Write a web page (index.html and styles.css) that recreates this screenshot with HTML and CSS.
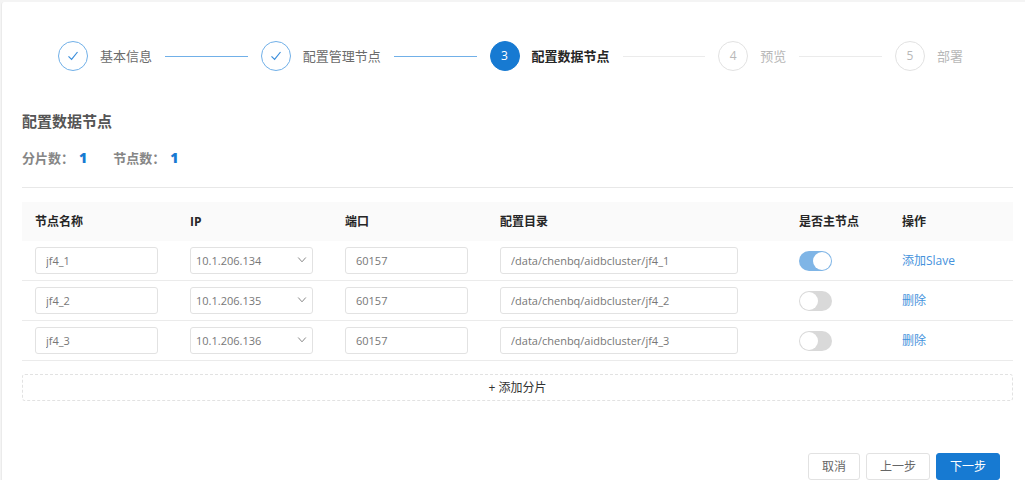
FILE: index.html
```html
<!DOCTYPE html>
<html lang="zh-CN">
<head>
<meta charset="utf-8">
<meta name="viewport" content="width=device-width, initial-scale=1">
<title>配置数据节点</title>
<link rel="stylesheet" href="styles.css">
</head>
<body>
<main class="card">
  <ol class="steps">
    <li class="step step-done">
      <span class="step-icon"><svg class="check" viewBox="0 0 12 12" aria-hidden="true"><path d="M1.5 6.4 4.6 9.4 10.5 2"/></svg></span>
      <span class="step-title">基本信息</span>
      <span class="step-line"></span>
    </li>
    <li class="step step-done">
      <span class="step-icon"><svg class="check" viewBox="0 0 12 12" aria-hidden="true"><path d="M1.5 6.4 4.6 9.4 10.5 2"/></svg></span>
      <span class="step-title">配置管理节点</span>
      <span class="step-line"></span>
    </li>
    <li class="step step-active" aria-current="step">
      <span class="step-icon">3</span>
      <span class="step-title">配置数据节点</span>
      <span class="step-line"></span>
    </li>
    <li class="step">
      <span class="step-icon">4</span>
      <span class="step-title">预览</span>
      <span class="step-line"></span>
    </li>
    <li class="step step-last">
      <span class="step-icon">5</span>
      <span class="step-title">部署</span>
    </li>
  </ol>

  <header class="summary">
    <h1 class="title">配置数据节点</h1>
    <div class="stats">
      <p class="stat">分片数：<strong class="stat-value">1</strong></p>
      <p class="stat">节点数：<strong class="stat-value">1</strong></p>
    </div>
  </header>

  <form class="form">
    <table class="nodes">
      <colgroup>
        <col class="col-field"><col class="col-field"><col class="col-field"><col><col class="col-master"><col class="col-action">
      </colgroup>
      <thead>
        <tr><th scope="col">节点名称</th><th scope="col">IP</th><th scope="col">端口</th><th scope="col">配置目录</th><th scope="col">是否主节点</th><th scope="col">操作</th></tr>
      </thead>
      <tbody>
        <tr>
          <td><input class="field" type="text" aria-label="节点名称" value="jf4_1"></td>
          <td><div class="picker"><select class="field field-select" aria-label="IP"><option>10.1.206.134</option></select><svg class="chevron" viewBox="0 0 10 10" aria-hidden="true"><path d="M1.2 2.5 5 6.8 8.8 2.5"/></svg></div></td>
          <td><input class="field" type="text" aria-label="端口" value="60157"></td>
          <td><input class="field field-path" type="text" aria-label="配置目录" value="/data/chenbq/aidbcluster/jf4_1"></td>
          <td><input class="switch" type="checkbox" role="switch" aria-label="是否主节点" checked></td>
          <td><a class="link" href="#">添加Slave</a></td>
        </tr>
        <tr>
          <td><input class="field" type="text" aria-label="节点名称" value="jf4_2"></td>
          <td><div class="picker"><select class="field field-select" aria-label="IP"><option>10.1.206.135</option></select><svg class="chevron" viewBox="0 0 10 10" aria-hidden="true"><path d="M1.2 2.5 5 6.8 8.8 2.5"/></svg></div></td>
          <td><input class="field" type="text" aria-label="端口" value="60157"></td>
          <td><input class="field field-path" type="text" aria-label="配置目录" value="/data/chenbq/aidbcluster/jf4_2"></td>
          <td><input class="switch" type="checkbox" role="switch" aria-label="是否主节点"></td>
          <td><a class="link" href="#">删除</a></td>
        </tr>
        <tr>
          <td><input class="field" type="text" aria-label="节点名称" value="jf4_3"></td>
          <td><div class="picker"><select class="field field-select" aria-label="IP"><option>10.1.206.136</option></select><svg class="chevron" viewBox="0 0 10 10" aria-hidden="true"><path d="M1.2 2.5 5 6.8 8.8 2.5"/></svg></div></td>
          <td><input class="field" type="text" aria-label="端口" value="60157"></td>
          <td><input class="field field-path" type="text" aria-label="配置目录" value="/data/chenbq/aidbcluster/jf4_3"></td>
          <td><input class="switch" type="checkbox" role="switch" aria-label="是否主节点"></td>
          <td><a class="link" href="#">删除</a></td>
        </tr>
      </tbody>
    </table>
    <button class="button button-add" type="button">+ 添加分片</button>
    <div class="actions">
      <button class="button" type="button">取消</button>
      <button class="button" type="button">上一步</button>
      <button class="button button-primary" type="submit">下一步</button>
    </div>
  </form>
</main>
</body>
</html>
```
FILE: styles.css
```css
* {
  box-sizing: border-box;
}

body {
  margin: 0;
  padding: 2px 0 0 1px;
  background: #f4f4f4;
  color: #262626;
  font-family: "Open Sans", "Noto Sans CJK SC", sans-serif;
  font-size: 12px;
  line-height: 20px;
}

.card {
  padding: 39px 12px 1px 20px;
  border-left: 1px solid #ebebeb;
  border-radius: 3px 0 0 0;
  background: #fff;
}

/* Steps */
.steps {
  display: flex;
  margin: 0;
  padding: 0 50px 0 36px;
  list-style: none;
}

.step {
  display: flex;
  flex: 1 0 auto;
  align-items: center;
  color: #b8b8b8;
  font-size: 13px;
}

.step-last {
  flex: none;
}

.step-icon {
  display: flex;
  align-items: center;
  justify-content: center;
  width: 30px;
  height: 30px;
  margin-right: 12px;
  border: 1px solid #e2e2e2;
  border-radius: 50%;
  font-size: 12px;
}

.step-line {
  flex: 1;
  height: 1px;
  margin: 0 13px;
  background: #ebebeb;
}

.step-done {
  color: #6b6b6b;
}

.step-done .step-icon {
  border-color: #71b0e8;
}

.step-done .step-line {
  background: #71b0e8;
}

.step-active {
  color: #262626;
  font-weight: 700;
}

.step-active .step-icon {
  border-color: #177ad2;
  background: #177ad2;
  color: #fff;
  font-weight: 400;
}

.check {
  width: 12px;
  height: 12px;
  fill: none;
  stroke: #3b8edb;
  stroke-width: 1.2;
}

/* Summary */
.summary {
  margin-top: 40px;
  padding-bottom: 19px;
  border-bottom: 1px solid #e8e8e8;
}

.title {
  margin: 0 0 17px;
  color: #555;
  font-size: 15px;
  line-height: 20px;
}

.stats {
  display: flex;
  gap: 26px;
}

.stat {
  margin: 0;
  color: #868686;
  font-size: 13px;
  font-weight: 700;
}

.stat-value {
  margin-left: 5px;
  color: #177ad2;
  font-size: 14px;
}

/* Node table */
.nodes {
  width: 100%;
  margin-top: 14px;
  border-collapse: separate;
  border-spacing: 0;
  table-layout: fixed;
}

.col-field {
  width: 155px;
}

.col-master {
  width: 103px;
}

.col-action {
  width: 124px;
}

.nodes th {
  padding: 10px 13px 9px;
  background: #fafafa;
  font-weight: 700;
  text-align: left;
}

.nodes td {
  height: 40px;
  padding: 6px 13px;
  border-bottom: 1px solid #ebebeb;
}

.field {
  display: block;
  width: 95%;
  height: 27px;
  padding: 0 10px;
  border: 1px solid #e2e2e2;
  border-radius: 3px;
  background: #fff;
  color: #777;
  font: inherit;
  font-size: 11px;
}

.field-path {
  width: 87%;
}

.picker {
  position: relative;
  width: 95%;
}

.field-select {
  width: 100%;
  padding: 0 5px;
  appearance: none;
}

.chevron {
  position: absolute;
  top: 8px;
  right: 6px;
  width: 10px;
  height: 10px;
  fill: none;
  stroke: #888;
  stroke-width: 1;
  pointer-events: none;
}

.switch {
  display: flex;
  width: 33px;
  height: 20px;
  margin: 0;
  padding: 1px;
  border-radius: 10px;
  background: #d9d9d9;
  appearance: none;
}

.switch::before {
  width: 18px;
  height: 18px;
  border-radius: 50%;
  background: #fff;
  content: "";
}

.switch:checked {
  justify-content: flex-end;
  background: #7fb5e6;
}

.link {
  color: #4592dc;
  text-decoration: none;
}

/* Buttons */
.button {
  height: 27px;
  padding: 0 13px;
  border: 1px solid #e2e2e2;
  border-radius: 3px;
  background: #fff;
  color: #666;
  font: inherit;
}

.button-add {
  width: 100%;
  margin-top: 13px;
  border-style: dashed;
  color: #333;
}

.actions {
  display: flex;
  justify-content: flex-end;
  gap: 6px;
  margin-top: 52px;
  padding-right: 13px;
}

.button-primary {
  border-color: #177ad2;
  background: #177ad2;
  color: #fff;
}
```
